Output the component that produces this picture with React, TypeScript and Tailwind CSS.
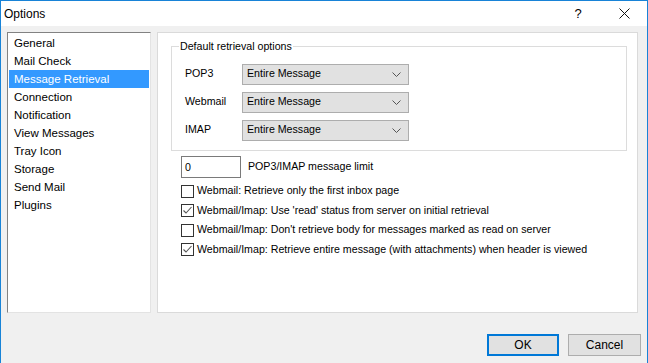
import { useState } from 'react';

const pages = [
  'General',
  'Mail Check',
  'Message Retrieval',
  'Connection',
  'Notification',
  'View Messages',
  'Tray Icon',
  'Storage',
  'Send Mail',
  'Plugins',
];

const checks = [
  { label: 'Webmail: Retrieve only the first inbox page', on: false },
  { label: "Webmail/Imap: Use 'read' status from server on initial retrieval", on: true },
  { label: "Webmail/Imap: Don't retrieve body for messages marked as read on server", on: false },
  { label: 'Webmail/Imap: Retrieve entire message (with attachments) when header is viewed', on: true },
];

function Combo({ label }: { label: string }) {
  return (
    <div className="flex h-[28px] items-center">
      <span className="w-[70px] pl-[13px]">{label}</span>
      <div className="flex h-[21px] w-[167px] items-center justify-between border border-[#adadad] bg-[#e1e1e1] pl-[4px] pr-[5px]">
        <span>Entire Message</span>
        <svg width="9" height="5" viewBox="0 0 9 5" className="mr-[2px]">
          <path d="M0.5 0.5 L4.5 4.5 L8.5 0.5" fill="none" stroke="#555" strokeWidth="1" />
        </svg>
      </div>
    </div>
  );
}

function Check({ label, on }: { label: string; on: boolean }) {
  return (
    <div className="flex h-[19.5px] items-center gap-[3px]">
      <div className="flex h-[13px] w-[13px] items-center justify-center border border-[#333] bg-white">
        {on && (
          <svg width="11" height="11" viewBox="0 0 11 11">
            <path d="M1.5 5.5 L4 8 L9.5 2" fill="none" stroke="#555" strokeWidth="1.1" />
          </svg>
        )}
      </div>
      <span>{label}</span>
    </div>
  );
}

export default function App() {
  const [selected, setSelected] = useState(2);

  return (
    <div className="flex h-[363px] w-[648px] flex-col overflow-hidden border-x border-t border-[#1883d7] bg-[#f0f0f0] font-['Liberation_Sans',sans-serif] text-black">
      {/* title bar */}
      <div className="flex h-[25px] shrink-0 items-center bg-white">
        <span className="flex-1 pl-[3px] text-[12px]">Options</span>
        <div className="flex h-full w-[46px] items-center justify-center text-[13px]">?</div>
        <div className="flex h-full w-[46px] items-center justify-center">
          <svg width="11" height="11" viewBox="0 0 11 11">
            <path d="M0.5 0.5 L10.5 10.5 M10.5 0.5 L0.5 10.5" stroke="#111" strokeWidth="1" />
          </svg>
        </div>
      </div>

      <div className="flex gap-[6px] pl-[6px] pt-[6px]">
        {/* page list */}
        <div className="h-[281px] w-[144px] border-b border-l border-r border-t border-b-[#e3e3e3] border-l-[#828282] border-r-[#e3e3e3] border-t-[#828282] bg-white px-[1px] pt-[1px] text-[11.5px]">
          {pages.map((p, i) => (
            <div
              key={p}
              onClick={() => setSelected(i)}
              className={`flex h-[18px] items-center pl-[5px] pt-[1px] ${i === selected ? 'bg-[#3399ff] text-white' : ''}`}
            >
              {p}
            </div>
          ))}
        </div>

        {/* settings panel */}
        <div className="h-[281px] w-[481px] border border-[#dadada] bg-white pl-[13px] pr-[10px] pt-[13px] text-[10.65px]">
          <div className="relative h-[105px] border border-[#dcdcdc] pt-[13px]">
            <span className="absolute left-[7px] top-[-8px] bg-white px-[1px] leading-[14px]">Default retrieval options</span>
            <Combo label="POP3" />
            <Combo label="Webmail" />
            <Combo label="IMAP" />
          </div>

          <div className="ml-[10px] mt-[5px] flex items-center gap-[7px]">
            <div className="flex h-[22px] w-[60px] items-start border border-[#7a7a7a] pl-[3px] pt-[3px]">0</div>
            <span>POP3/IMAP message limit</span>
          </div>
          <div className="ml-[10px] mt-[3.5px] flex flex-col">
            {checks.map((c) => (
              <Check key={c.label} label={c.label} on={c.on} />
            ))}
          </div>
        </div>
      </div>

      {/* buttons */}
      <div className="mt-[21px] flex justify-end gap-[9px] pr-[6px] text-[12px]">
        <button className="flex h-[22px] w-[72px] items-center justify-center border-2 border-[#0078d7] bg-[#e1e1e1]">OK</button>
        <button className="flex h-[22px] w-[73px] items-center justify-center border border-[#adadad] bg-[#e1e1e1]">Cancel</button>
      </div>
    </div>
  );
}
